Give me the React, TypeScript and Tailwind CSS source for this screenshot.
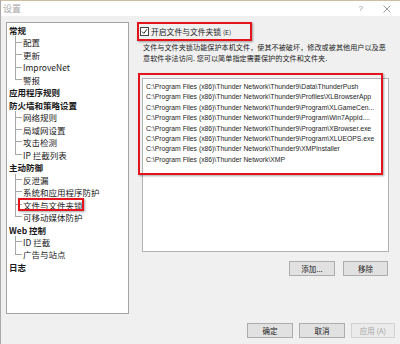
import React from "react";

type Node = { label: string; bold?: boolean; last?: boolean; child?: boolean };

const tree: Node[] = [
  { label: "常规", bold: true },
  { label: "配置", child: true },
  { label: "更新", child: true },
  { label: "ImproveNet", child: true },
  { label: "警报", child: true, last: true },
  { label: "应用程序规则", bold: true },
  { label: "防火墙和策略设置", bold: true },
  { label: "网络规则", child: true },
  { label: "局域网设置", child: true },
  { label: "攻击检测", child: true },
  { label: "IP 拦截列表", child: true, last: true },
  { label: "主动防御", bold: true },
  { label: "反泄漏", child: true },
  { label: "系统和应用程序防护", child: true },
  { label: "文件与文件夹锁", child: true },
  { label: "可移动媒体防护", child: true, last: true },
  { label: "Web 控制", bold: true },
  { label: "ID 拦截", child: true },
  { label: "广告与站点", child: true, last: true },
  { label: "日志", bold: true },
];

const paths = [
  "C:\\Program Files (x86)\\Thunder Network\\Thunder9\\Data\\ThunderPush",
  "C:\\Program Files (x86)\\Thunder Network\\Thunder9\\Profiles\\XLBrowserApp",
  "C:\\Program Files (x86)\\Thunder Network\\Thunder9\\Program\\XLGameCen...",
  "C:\\Program Files (x86)\\Thunder Network\\Thunder9\\Program\\Win7AppId....",
  "C:\\Program Files (x86)\\Thunder Network\\Thunder9\\Program\\XBrowser.exe",
  "C:\\Program Files (x86)\\Thunder Network\\Thunder9\\Program\\XLUEOPS.exe",
  "C:\\Program Files (x86)\\Thunder Network\\Thunder9\\XMPInstaller",
  "C:\\Program Files (x86)\\Thunder Network\\XMP",
];

const cjk = "font-['Noto_Sans_CJK_SC','Noto_Sans',sans-serif]";

function Btn({ children, disabled, w }: { children: React.ReactNode; disabled?: boolean; w: string }) {
  return (
    <div
      className={`${w} h-[15px] flex items-center justify-center border text-[7.5px] leading-none ${
        disabled ? "bg-[#ebebeb] border-[#d2d2d2] text-[#a5a5a5]" : "bg-[#e1e1e1] border-[#adadad] text-[#222]"
      }`}
    >
      {children}
    </div>
  );
}

export default function App() {
  return (
    <div className={`relative w-[400px] h-[344px] bg-[#f0f0f0] flex flex-col overflow-hidden border-l border-[#a9a9a9] ${cjk}`}>
      {/* title bar */}
      <div className="h-[16px] bg-white border-t border-[#cdbf9f] flex items-center justify-between pl-[2px] pr-[9px]">
        <span className="text-[9px] text-[#a8a8a8] leading-none">设置</span>
        <div className="flex items-center gap-[20px] text-[#9a9a9a]">
          <span className="text-[8px] leading-none font-['Liberation_Sans',sans-serif]">?</span>
          <svg width="8" height="8" viewBox="0 0 8 8">
            <path d="M0.5 0.5 L7.5 7.5 M7.5 0.5 L0.5 7.5" stroke="#8e8e8e" strokeWidth="0.9" />
          </svg>
        </div>
      </div>

      {/* body */}
      <div className="flex pt-[6px]">
        {/* tree */}
        <div className="ml-[5px] w-[123px] h-[292px] bg-white border border-[#a3a3a3] pt-[1px] pl-[2px]">
          {tree.map((n, i) => (
            <div key={i} className="h-[12.47px] flex items-stretch text-[8.5px] text-[#1a1a1a]">
              {n.child && (
                <div className="ml-[6px] w-[7px] flex flex-col">
                  <div className="h-1/2 border-l border-b border-[#a8a8a8]" />
                  <div className={`flex-1 ${n.last ? "" : "border-l border-[#a8a8a8]"}`} />
                </div>
              )}
              <span className={`leading-[12.47px] whitespace-nowrap ${n.bold ? "font-bold" : "pl-[1px]"}`}>
                {n.label}
              </span>
            </div>
          ))}
        </div>

        {/* right column */}
        <div className="ml-[11px] w-[249px] flex flex-col">
          <div className="h-[18px] flex items-center pt-[1px]">
            <div className="w-[9px] h-[9px] border border-[#444] bg-white flex items-center justify-center">
              <svg width="7" height="7" viewBox="0 0 7 7">
                <path d="M1 3.6 L2.8 5.4 L6 1.3" fill="none" stroke="#222" strokeWidth="1" />
              </svg>
            </div>
            <span className="ml-[2px] text-[7.8px] leading-none text-[#1a1a1a] whitespace-nowrap">
              开启文件与文件夹锁 <span className="text-[6.5px]">(E)</span>
            </span>
          </div>
          <div className="pl-[3px] pt-[2px] text-[7.1px] tracking-[0.05px] leading-[11px] text-[#222] whitespace-nowrap">
            <div>文件与文件夹锁功能保护本机文件，使其不被破坏，修改或被其他用户以及恶</div>
            <div>意软件非法访问. 您可以简单指定需要保护的文件和文件夹.</div>
          </div>
          <div className="ml-[2px] mt-[14px] h-[174px] bg-white border border-[#b3b3b3] pt-[3px] pl-[3px]">
            {paths.map((p, i) => (
              <div key={i} className="h-[10.4px] leading-[10.4px] text-[6.8px] text-[#1e1e1e] whitespace-nowrap font-['Liberation_Sans',sans-serif]">
                {p}
              </div>
            ))}
          </div>
          <div className="flex justify-end gap-[8px] mt-[9px] pr-[1px]">
            <Btn w="w-[46px]">添加...</Btn>
            <Btn w="w-[45px]">移除</Btn>
          </div>
        </div>
      </div>

      {/* bottom buttons */}
      <div className="flex justify-end gap-[6px] mt-[9px] pr-[5px]">
        <Btn w="w-[46px]">确定</Btn>
        <Btn w="w-[46px]">取消</Btn>
        <Btn w="w-[44px]" disabled>
          应用 (A)
        </Btn>
      </div>

      {/* red annotation boxes */}
      <div className="absolute left-[136px] top-[22px] w-[115px] h-[19px] border-2 border-[#e3141c] shadow-[1px_1px_2px_rgba(0,0,0,0.35)]" />
      <div className="absolute left-[137px] top-[73px] w-[245px] h-[102px] border-2 border-[#e3141c] shadow-[1px_1px_2px_rgba(0,0,0,0.35)]" />
      <div className="absolute left-[17px] top-[198px] w-[66px] h-[13px] border-2 border-[#e3141c] shadow-[1px_1px_2px_rgba(0,0,0,0.35)]" />
    </div>
  );
}
